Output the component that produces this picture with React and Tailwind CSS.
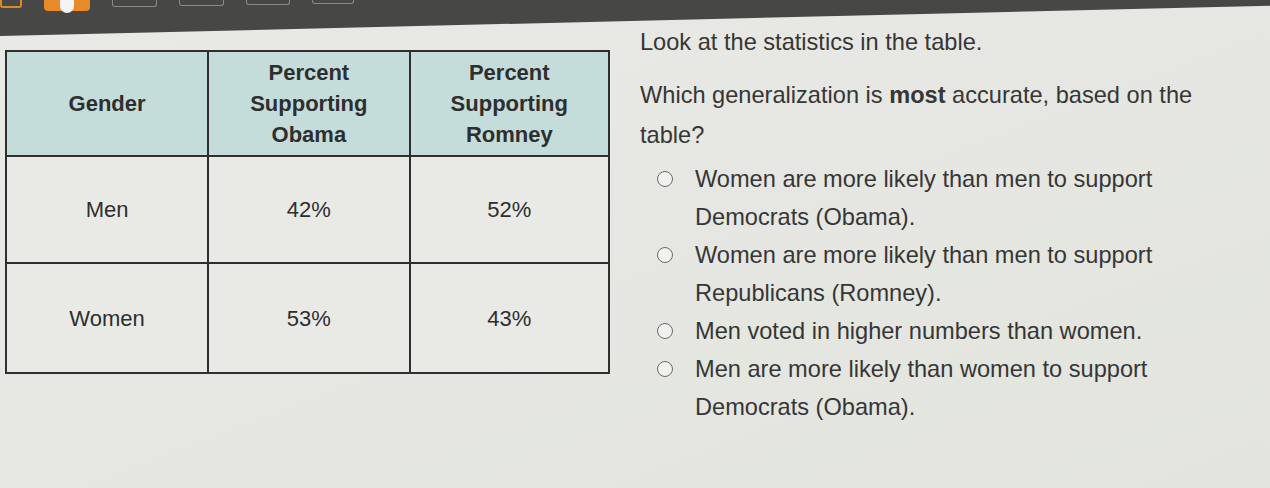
const rows = [
  { gender: 'Men', obama: '42%', romney: '52%' },
  { gender: 'Women', obama: '53%', romney: '43%' },
]

const options = [
  'Women are more likely than men to support Democrats (Obama).',
  'Women are more likely than men to support Republicans (Romney).',
  'Men voted in higher numbers than women.',
  'Men are more likely than women to support Democrats (Obama).',
]

const Toolbar = () => (
  <div className="absolute top-0 left-0 right-0 h-[36px] bg-[#474745] [clip-path:polygon(0_0,100%_0,100%_16%,0_100%)]">
    <div className="flex items-start gap-[22px]">
      <div className="w-[22px] h-[8px] border-2 border-t-0 border-[#d98a2b] rounded-b-[3px]" />
      <div className="w-[46px] h-[11px] bg-[#e8892a] rounded-b-[4px] flex justify-center">
        <div className="w-[14px] h-[13px] bg-[#f4f4f4] rounded-b-full" />
      </div>
      <div className="w-[45px] h-[7px] border border-t-0 border-[#8a8a88] rounded-b-[3px]" />
      <div className="w-[45px] h-[6px] border border-t-0 border-[#8a8a88] rounded-b-[3px]" />
      <div className="w-[44px] h-[5px] border border-t-0 border-[#8a8a88] rounded-b-[3px]" />
      <div className="w-[42px] h-[4px] border border-t-0 border-[#8a8a88] rounded-b-[3px]" />
    </div>
  </div>
)

const StatsTable = () => (
  <table className="self-start mt-[50px] w-[605px] border-collapse border-2 border-[#2f2f2f] text-[#2e2e2e] text-center">
    <thead>
      <tr className="h-[105px] bg-[#c4dcda] text-[22px] leading-[31px]">
        <th className="w-[203px] border-2 border-[#2f2f2f] font-bold">Gender</th>
        <th className="w-[202px] border-2 border-[#2f2f2f] font-bold">
          Percent<br />Supporting<br />Obama
        </th>
        <th className="w-[200px] border-2 border-[#2f2f2f] font-bold">
          Percent<br />Supporting<br />Romney
        </th>
      </tr>
    </thead>
    <tbody className="bg-[#e9eae6] text-[22px]">
      {rows.map((r, i) => (
        <tr key={r.gender} className={i === 0 ? 'h-[107px]' : 'h-[110px]'}>
          <td className="border-2 border-[#2f2f2f]">{r.gender}</td>
          <td className="border-2 border-[#2f2f2f]">{r.obama}</td>
          <td className="border-2 border-[#2f2f2f]">{r.romney}</td>
        </tr>
      ))}
    </tbody>
  </table>
)

const Question = () => (
  <div className="ml-[30px] pt-[22px] w-[600px] text-[23.6px] text-[#363636]">
    <p className="leading-[40px]">Look at the statistics in the table.</p>
    <p className="mt-[13px] leading-[40px]">
      Which generalization is <b>most</b> accurate, based on the table?
    </p>
    <div className="mt-[5px] pl-[17px] flex flex-col">
      {options.map(o => (
        <label key={o} className="flex items-start gap-[22px]">
          <span className="mt-[11px] w-[16px] h-[16px] shrink-0 rounded-full border-[1.5px] border-[#6a6a6a] bg-[#f1f1ee]" />
          <span className="w-[500px] leading-[38px]">{o}</span>
        </label>
      ))}
    </div>
  </div>
)

export default function App() {
  return (
    <div className="relative w-[1270px] h-[488px] overflow-hidden bg-gradient-to-br from-[#e9eae6] via-[#e6e7e2] to-[#e2e4dd] font-['Liberation_Sans',Arial,sans-serif]">
      <Toolbar />
      <div className="flex pl-[5px]">
        <StatsTable />
        <Question />
      </div>
    </div>
  )
}
